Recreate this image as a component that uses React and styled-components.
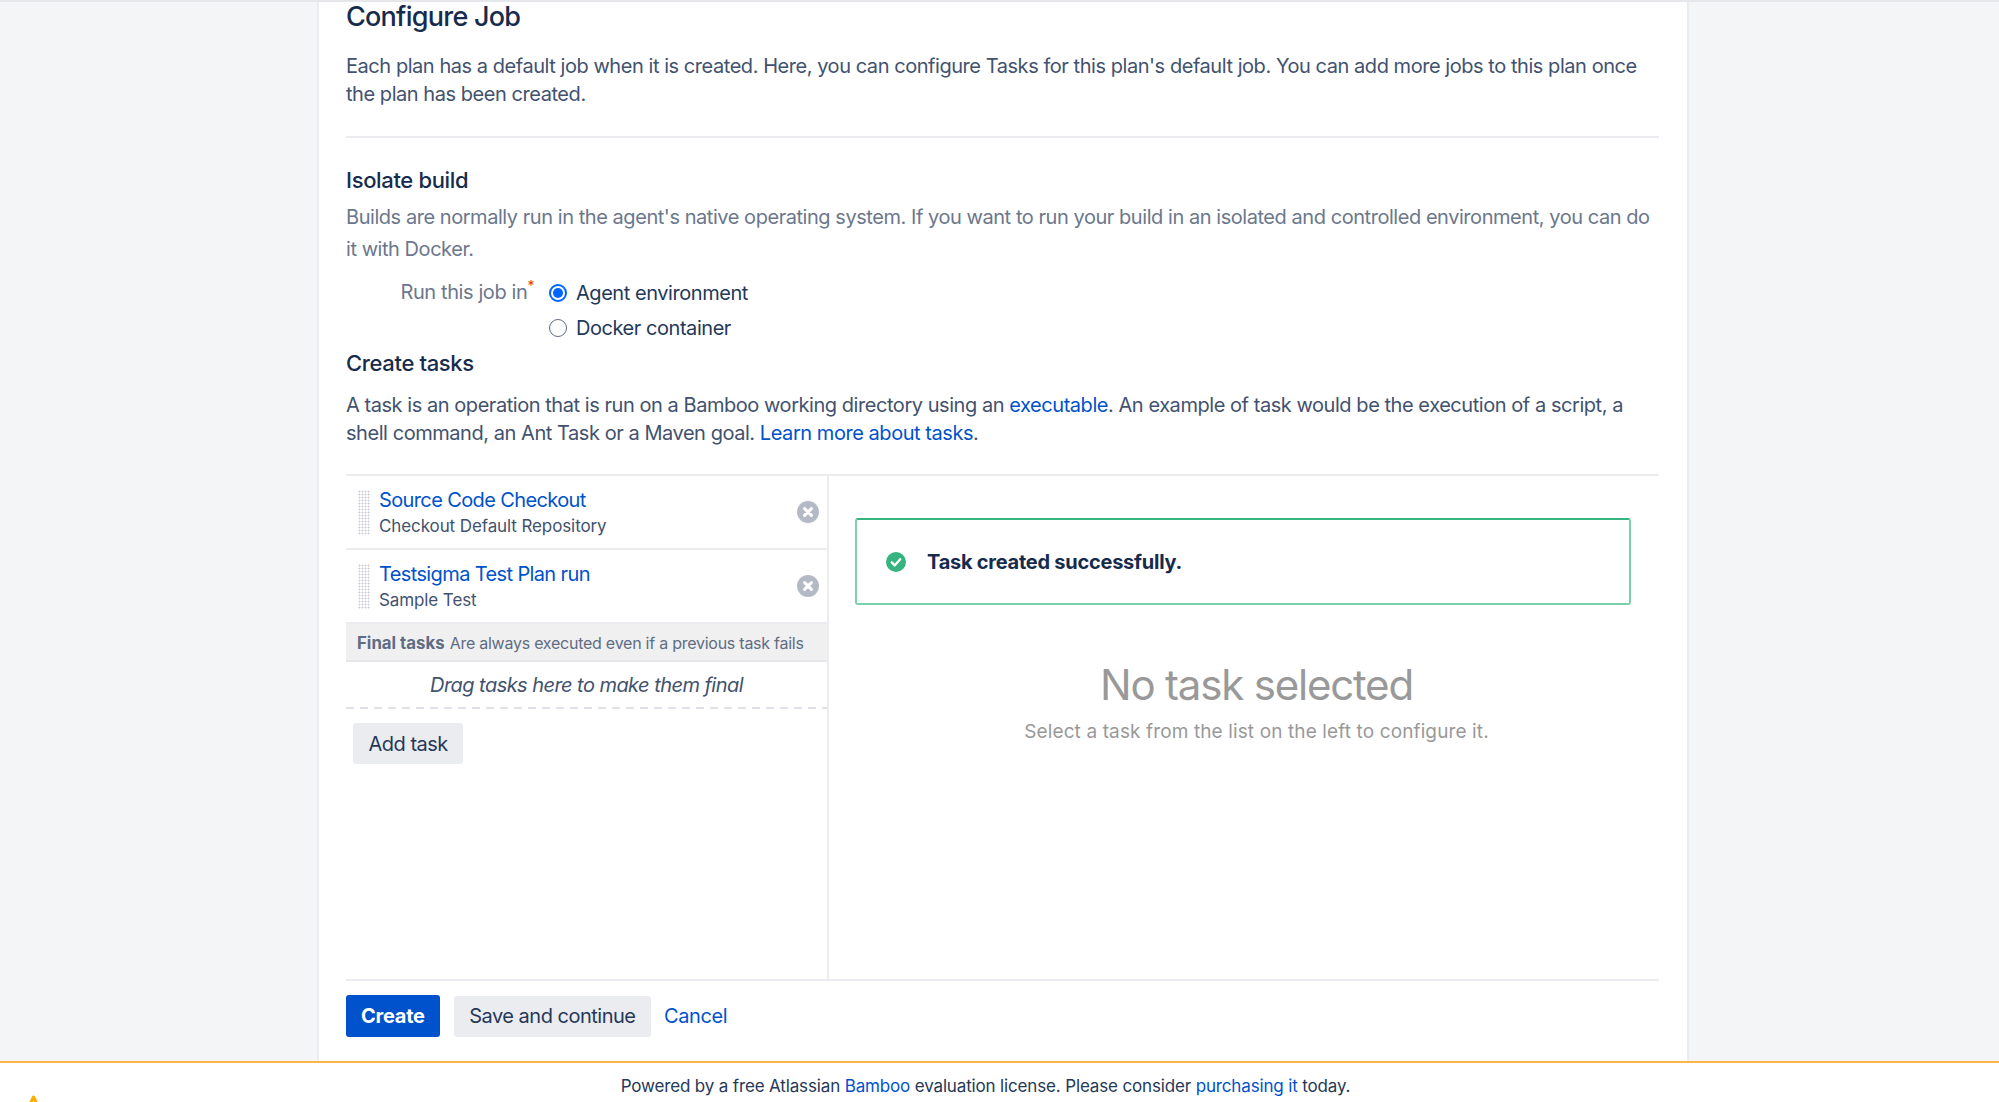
import styled, { createGlobalStyle } from "styled-components";

const GlobalStyle = createGlobalStyle`
  html, body {
    margin: 0;
    padding: 0;
    background: #ffffff;
  }

  body {
    font-family: Inter, "Liberation Sans", sans-serif;
    color: #172b4d;
  }
`;

const Screen = styled.div`
  height: 1102px;
  overflow: hidden;
  display: flex;
  flex-direction: column;
`;

const Backdrop = styled.div`
  height: 1063px;
  box-sizing: border-box;
  background: #f4f5f7;
  border-top: 2px solid #e6e7ea;
  border-bottom: 2px solid #ffb44a;
  flex-shrink: 0;
`;

const Panel = styled.main`
  width: 1372px;
  height: 100%;
  margin-left: 317px;
  box-sizing: border-box;
  background: #ffffff;
  border-left: 2px solid #ebecf0;
  border-right: 2px solid #ebecf0;
  padding: 0 28px 0 27px;
`;

const Title = styled.h1`
  margin: 0;
  font-size: 27px;
  line-height: 30px;
  font-weight: 500;
  letter-spacing: -0.75px;
  color: #172b4d;
`;

const Intro = styled.p`
  margin: 20px 0 0;
  font-size: 20px;
  line-height: 28px;
  letter-spacing: -0.45px;
  color: #42526e;
`;

const Rule = styled.hr`
  margin: ${(p) => p.$top || 0}px 0 0;
  border: 0;
  height: 2px;
  background: #ebecf0;
`;

const Subtitle = styled.h3`
  margin: ${(p) => p.$top}px 0 0;
  font-size: 22px;
  line-height: 26px;
  font-weight: 500;
  letter-spacing: -0.35px;
  color: #172b4d;
`;

const Muted = styled.p`
  margin: 8px 0 0;
  font-size: 20px;
  line-height: 32px;
  letter-spacing: -0.45px;
  color: #6b778c;
`;

const TaskIntro = styled.p`
  margin: 15px 0 0;
  font-size: 20px;
  line-height: 28px;
  letter-spacing: -0.45px;
  color: #42526e;
`;

const Link = styled.a`
  color: #0052cc;
  text-decoration: none;
`;

const RunField = styled.div`
  display: grid;
  grid-template-columns: 188px 1fr;
  margin-top: 10px;
`;

const FieldLabel = styled.label`
  align-self: start;
  font-size: 20px;
  line-height: 35px;
  letter-spacing: -0.4px;
  color: #6b778c;
  text-align: right;
`;

const Required = styled.sup`
  color: #de350b;
  font-size: 14px;
  line-height: 0;
  vertical-align: 8px;
`;

const RadioList = styled.div`
  display: flex;
  flex-direction: column;
  padding-left: 15px;
`;

const RadioRow = styled.div`
  display: flex;
  align-items: center;
  gap: 9px;
  height: 35px;
  font-size: 20px;
  letter-spacing: -0.45px;
  color: #253858;
`;

const Radio = styled.span`
  width: 18px;
  height: 18px;
  box-sizing: border-box;
  border-radius: 50%;
  flex-shrink: 0;
  border: ${(p) => (p.$on ? "2px solid #0065ff" : "1.5px solid #5e6c84")};
  background: #ffffff;
  display: flex;
  align-items: center;
  justify-content: center;

  &::after {
    content: "";
    display: ${(p) => (p.$on ? "block" : "none")};
    width: 10px;
    height: 10px;
    border-radius: 50%;
    background: #0065ff;
  }
`;

const Workspace = styled.div`
  display: grid;
  grid-template-columns: 483px 1fr;
  height: 503px;
`;

const TaskColumn = styled.section`
  border-right: 2px solid #ebecf0;
`;

const TaskRow = styled.div`
  height: 74px;
  box-sizing: border-box;
  border-bottom: 2px solid #ebecf0;
  display: flex;
  align-items: center;
  padding: 0 8px 0 12px;
`;

const Handle = styled.span`
  width: 12px;
  height: 45px;
  flex-shrink: 0;
  background-image: radial-gradient(circle, #c9cdd3 0.9px, transparent 1.1px);
  background-size: 3px 3px;
`;

const TaskText = styled.div`
  flex: 1;
  padding-left: 9px;
`;

const TaskName = styled.a`
  display: block;
  font-size: 20px;
  line-height: 26px;
  letter-spacing: -0.62px;
  color: #0052cc;
`;

const TaskDetail = styled.div`
  margin-top: 1px;
  font-size: 17px;
  line-height: 24px;
  letter-spacing: -0.1px;
  color: #42526e;
`;

const RemoveIcon = styled.svg`
  width: 22px;
  height: 22px;
  flex-shrink: 0;
`;

const FinalHeader = styled.div`
  height: 38px;
  box-sizing: border-box;
  background: #f0f0f0;
  border-bottom: 2px solid #e6e7ea;
  padding: 2px 0 0 11px;
  display: flex;
  align-items: center;
  gap: 5px;
  font-size: 16px;
  letter-spacing: -0.25px;
  color: #5e6c84;
`;

const FinalLabel = styled.strong`
  font-size: 16.8px;
  font-weight: 700;
  letter-spacing: 0;
  color: #5e6c84;
`;

const DropZone = styled.div`
  height: 47px;
  box-sizing: border-box;
  padding-bottom: 2px;
  background: repeating-linear-gradient(90deg, #dfe1e6 0 8px, transparent 8px 14px) bottom / 100% 2px no-repeat;
  display: flex;
  align-items: center;
  justify-content: center;
  font-size: 20px;
  font-style: italic;
  letter-spacing: -0.55px;
  color: #42526e;
`;

const GreyButton = styled.button`
  height: 41px;
  padding: 0 15.5px;
  border: 0;
  border-radius: 3px;
  background: #ebecf0;
  color: #253858;
  font-family: inherit;
  font-size: 20px;
  letter-spacing: -0.5px;
`;

const AddWrap = styled.div`
  padding: 14px 0 0 7px;
`;

const Detail = styled.section`
  padding: 42px 0 0 26px;
`;

const SuccessBox = styled.div`
  width: 776px;
  height: 87px;
  box-sizing: border-box;
  border: 2px solid #79d2ab;
  border-top-color: #36b37e;
  border-radius: 3px;
  display: flex;
  align-items: center;
  gap: 21px;
  padding-left: 29px;
  font-size: 20px;
  font-weight: 700;
  letter-spacing: -0.25px;
  color: #172b4d;
`;

const Empty = styled.div`
  margin-top: 54px;
  padding-right: 1px;
  text-align: center;
`;

const EmptyTitle = styled.div`
  font-size: 42px;
  line-height: 52px;
  letter-spacing: -1.2px;
  color: #999999;
`;

const EmptyText = styled.div`
  margin-top: 7px;
  font-size: 19px;
  line-height: 28px;
  letter-spacing: 0.12px;
  color: #999999;
`;

const Actions = styled.div`
  display: flex;
  align-items: center;
  margin-top: 14px;
`;

const PrimaryButton = styled.button`
  height: 42px;
  padding: 0 15px;
  margin-right: 14px;
  border: 0;
  border-radius: 3px;
  background: #0052cc;
  color: #ffffff;
  font-family: inherit;
  font-size: 20px;
  font-weight: 700;
  letter-spacing: -0.25px;
`;

const CancelLink = styled(Link)`
  margin-left: 13px;
  font-size: 20px;
  letter-spacing: -0.4px;
`;

const Footer = styled.footer`
  position: relative;
  flex: 1;
  text-align: center;
  font-size: 17px;
  line-height: 22px;
  letter-spacing: -0.15px;
  padding: 12px 28px 0 0;
  color: #253858;
`;

const FooterMark = styled.svg`
  position: absolute;
  left: 26px;
  top: 32px;
  width: 15px;
  height: 15px;
`;

function Remove() {
  return (
    <RemoveIcon viewBox="0 0 22 22">
      <circle cx="11" cy="11" r="11" fill="#b3bac5" />
      <path d="M7.6 7.6l6.8 6.8M14.4 7.6l-6.8 6.8" stroke="#fff" strokeWidth="3" strokeLinecap="round" />
    </RemoveIcon>
  );
}

export default function App() {
  return (
    <Screen>
      <GlobalStyle />
      <Backdrop>
        <Panel>
          <Title>Configure Job</Title>
          <Intro>
            Each plan has a default job when it is created. Here, you can configure Tasks for this plan's default job. You can add more jobs to this plan once the plan has been created.
          </Intro>
          <Rule $top={28} />

          <Subtitle $top={29}>Isolate build</Subtitle>
          <Muted>
            Builds are normally run in the agent's native operating system. If you want to run your build in an isolated and controlled environment, you can do it with Docker.
          </Muted>
          <RunField>
            <FieldLabel>
              Run this job in<Required>*</Required>
            </FieldLabel>
            <RadioList>
              <RadioRow>
                <Radio $on />
                Agent environment
              </RadioRow>
              <RadioRow>
                <Radio />
                Docker container
              </RadioRow>
            </RadioList>
          </RunField>

          <Subtitle $top={5}>Create tasks</Subtitle>
          <TaskIntro>
            A task is an operation that is run on a Bamboo working directory using an <Link>executable</Link>. An example of task would be the execution of a script, a shell command, an Ant Task or a Maven goal. <Link>Learn more about tasks</Link>.
          </TaskIntro>
          <Rule $top={27} />

          <Workspace>
            <TaskColumn>
              <TaskRow>
                <Handle />
                <TaskText>
                  <TaskName>Source Code Checkout</TaskName>
                  <TaskDetail>Checkout Default Repository</TaskDetail>
                </TaskText>
                <Remove />
              </TaskRow>
              <TaskRow>
                <Handle />
                <TaskText>
                  <TaskName>Testsigma Test Plan run</TaskName>
                  <TaskDetail>Sample Test</TaskDetail>
                </TaskText>
                <Remove />
              </TaskRow>
              <FinalHeader>
                <FinalLabel>Final tasks</FinalLabel>
                Are always executed even if a previous task fails
              </FinalHeader>
              <DropZone>Drag tasks here to make them final</DropZone>
              <AddWrap>
                <GreyButton>Add task</GreyButton>
              </AddWrap>
            </TaskColumn>
            <Detail>
              <SuccessBox>
                <svg width="20" height="20" viewBox="0 0 20 20">
                  <circle cx="10" cy="10" r="10" fill="#36b37e" />
                  <path d="M5.8 10.3l3 3 5.4-6" fill="none" stroke="#fff" strokeWidth="2.4" strokeLinecap="round" strokeLinejoin="round" />
                </svg>
                Task created successfully.
              </SuccessBox>
              <Empty>
                <EmptyTitle>No task selected</EmptyTitle>
                <EmptyText>Select a task from the list on the left to configure it.</EmptyText>
              </Empty>
            </Detail>
          </Workspace>
          <Rule />

          <Actions>
            <PrimaryButton>Create</PrimaryButton>
            <GreyButton>Save and continue</GreyButton>
            <CancelLink>Cancel</CancelLink>
          </Actions>
        </Panel>
      </Backdrop>
      <Footer>
        Powered by a free Atlassian <Link>Bamboo</Link> evaluation license. Please consider <Link>purchasing it</Link> today.
        <FooterMark viewBox="0 0 15 15">
          <path d="M7.5 2L1.5 14h12z" fill="none" stroke="#ffab00" strokeWidth="3" strokeLinejoin="round" />
        </FooterMark>
      </Footer>
    </Screen>
  );
}
